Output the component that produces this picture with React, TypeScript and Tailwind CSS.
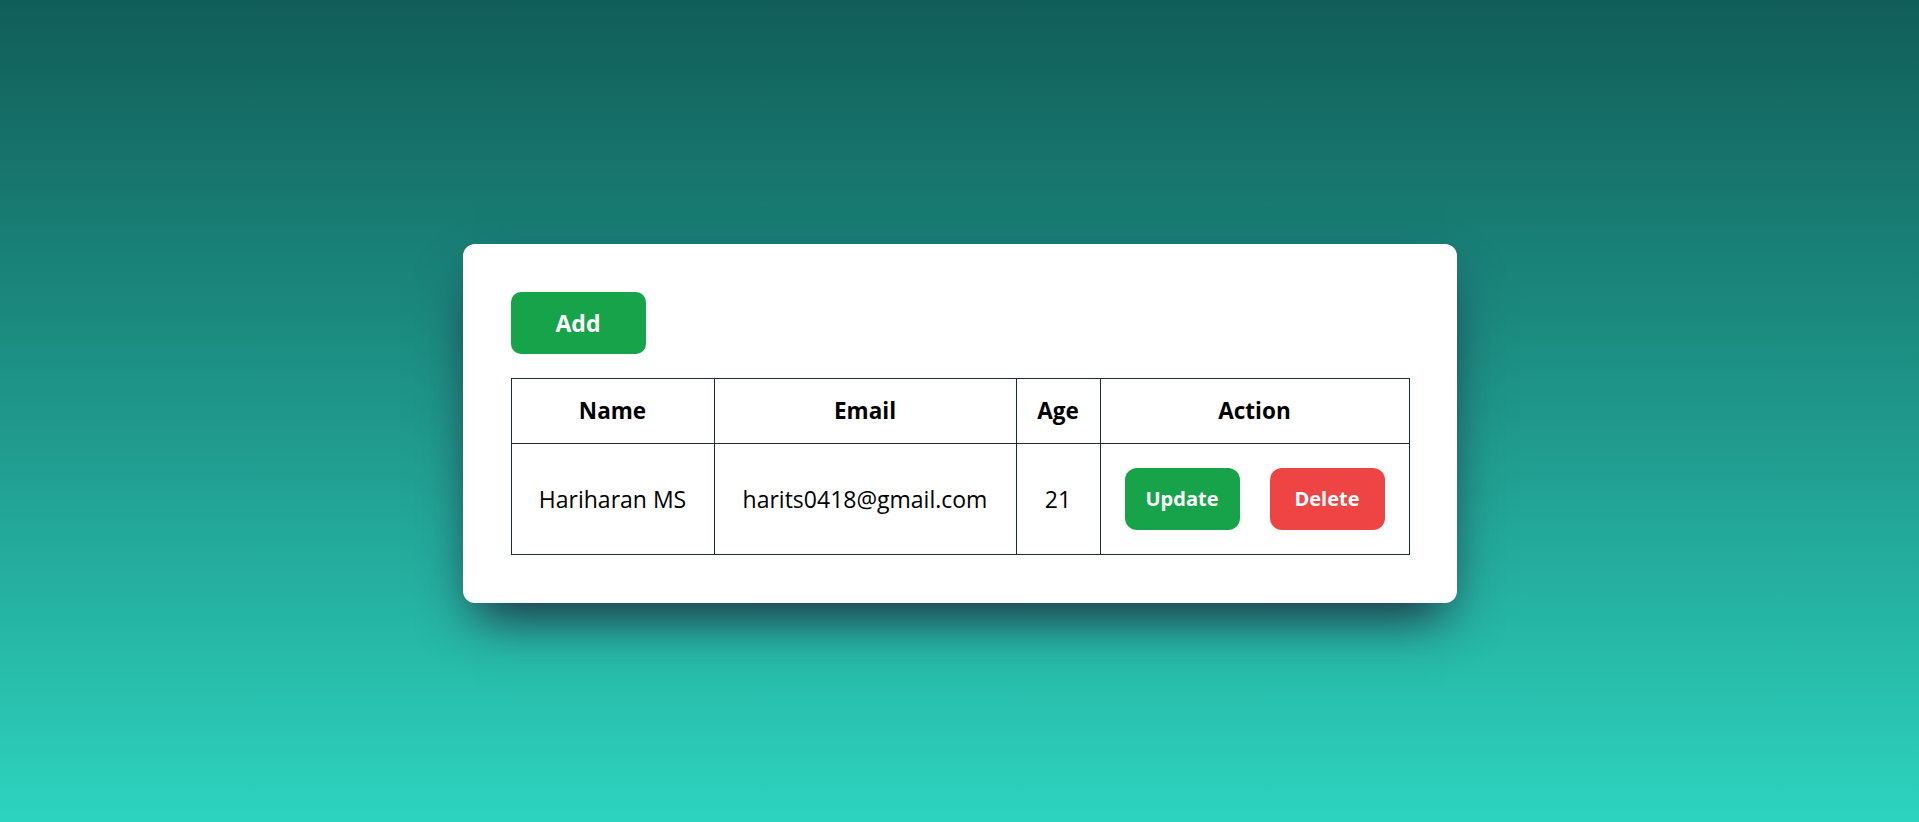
const users = [{ name: 'Hariharan MS', email: 'harits0418@gmail.com', age: 21 }];

export default function App() {
  return (
    <div className="h-screen bg-gradient-to-b from-[#115e59] to-[#2dd4bf] pt-[244px] font-['Open_Sans',sans-serif]">
      <div className="mx-auto w-[994px] rounded-xl bg-white p-12 shadow-[0_25px_50px_-12px_#1e293b]">
        <button className="mb-6 h-[62px] w-[135px] rounded-[10px] bg-[#16a34a] text-[23px] font-bold text-white">
          Add
        </button>
        <table className="w-full table-fixed border-collapse border border-[#1e293b] text-black">
          <colgroup>
            <col className="w-[203px]" />
            <col className="w-[302px]" />
            <col className="w-[84px]" />
            <col className="w-[309px]" />
          </colgroup>
          <thead>
            <tr>
              {['Name', 'Email', 'Age', 'Action'].map((h) => (
                <th key={h} className="border border-[#1e293b] py-4 text-center text-[22.5px] font-bold leading-8">
                  {h}
                </th>
              ))}
            </tr>
          </thead>
          <tbody>
            {users.map((u) => (
              <tr key={u.email}>
                <td className="border border-[#1e293b] p-6 text-center text-[23px]">{u.name}</td>
                <td className="border border-[#1e293b] p-6 text-center text-[23px]">{u.email}</td>
                <td className="border border-[#1e293b] p-6 text-center text-[23px]">{u.age}</td>
                <td className="border border-[#1e293b] px-6 py-6">
                  <div className="flex justify-between">
                    <button className="h-[62px] w-[115px] rounded-xl bg-[#16a34a] text-[20px] font-bold text-white">
                      Update
                    </button>
                    <button className="h-[62px] w-[115px] rounded-xl bg-[#ef4444] text-[20px] font-bold text-white">
                      Delete
                    </button>
                  </div>
                </td>
              </tr>
            ))}
          </tbody>
        </table>
      </div>
    </div>
  );
}
